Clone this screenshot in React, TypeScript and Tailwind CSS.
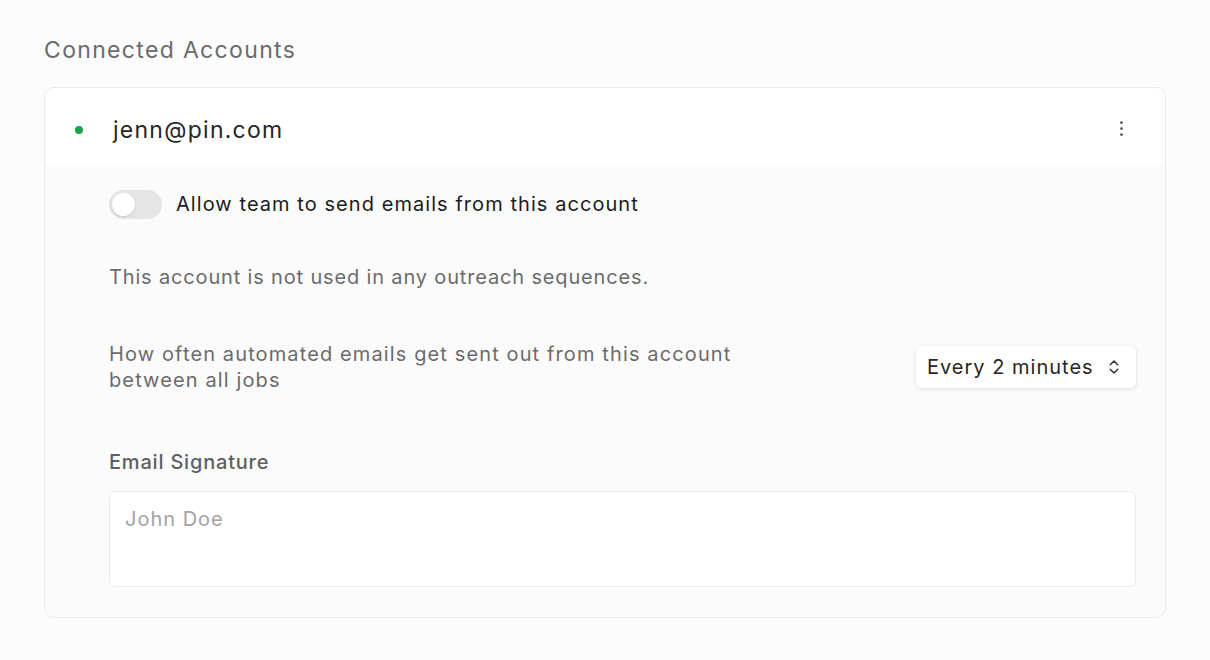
import { ChevronsUpDown } from "lucide-react";

function Toggle() {
  return (
    <div className="flex h-[29px] w-[53px] shrink-0 items-center rounded-full bg-[#e5e5e5] px-[3px]">
      <div className="h-[23px] w-[23px] rounded-full bg-white shadow-[0_1px_2px_rgba(0,0,0,0.15)]" />
    </div>
  );
}

function Kebab() {
  return (
    <div className="flex flex-col items-center gap-[3px]">
      <span className="h-[3px] w-[3px] rounded-full bg-[#6b6b6b]" />
      <span className="h-[3px] w-[3px] rounded-full bg-[#6b6b6b]" />
      <span className="h-[3px] w-[3px] rounded-full bg-[#6b6b6b]" />
    </div>
  );
}

export default function App() {
  return (
    <div className="min-h-[660px] bg-[#fcfcfc] px-[44px] pt-[35px] font-['Inter','Liberation_Sans',sans-serif] tracking-[0.05em]">
      <h2 className="text-[23px] leading-[30px] tracking-[0.058em] text-[#6b6b6b]">Connected Accounts</h2>

      <div className="mt-[22px] overflow-hidden rounded-[10px] border border-[#ebebeb] bg-[#fbfbfb]">
        <div className="flex h-[76px] items-center bg-white pl-[30px] pr-[42px] pt-[8px]">
          <span className="h-[8px] w-[8px] rounded-full bg-[#16a34a]" />
          <span className="ml-[30px] text-[23px] tracking-[0.055em] text-[#262626]">jenn@pin.com</span>
          <div className="ml-auto -mt-[4px]">
            <Kebab />
          </div>
        </div>

        <div className="pb-[30px] pl-[64px] pr-[29px]">
          <div className="mt-[25px] flex items-center gap-[14px]">
            <Toggle />
            <span className="text-[20px] tracking-[0.053em] text-[#1c1c1c]">Allow team to send emails from this account</span>
          </div>

          <p className="mt-[43px] text-[20px] tracking-[0.042em] text-[#6b6b6b]">This account is not used in any outreach sequences.</p>

          <div className="mt-[49px] flex items-center justify-between">
            <p className="text-[20px] leading-[26px] tracking-[0.056em] text-[#6b6b6b]">
              How often automated emails get sent out from this account
              <br />
              between all jobs
            </p>
            <button className="flex h-[42px] w-[220px] items-center justify-between rounded-[6px] bg-white pl-[11px] pr-[13px] text-[20px] tracking-[0.05em] text-[#262626] shadow-[0_1px_4px_rgba(0,0,0,0.12)]">
              Every 2 minutes
              <ChevronsUpDown size={18} strokeWidth={2} className="text-[#333]" />
            </button>
          </div>

          <p className="mt-[54px] text-[20px] font-medium text-[#5f5f5f]">Email Signature</p>

          <textarea
            placeholder="John Doe"
            className="mt-[14px] block h-[96px] w-full resize-none rounded-[6px] border border-[#ececec] bg-white px-[15px] py-[12px] text-[20px] tracking-[0.05em] text-[#262626] outline-none placeholder:text-[#a3a3a3]"
          />
        </div>
      </div>
    </div>
  );
}
